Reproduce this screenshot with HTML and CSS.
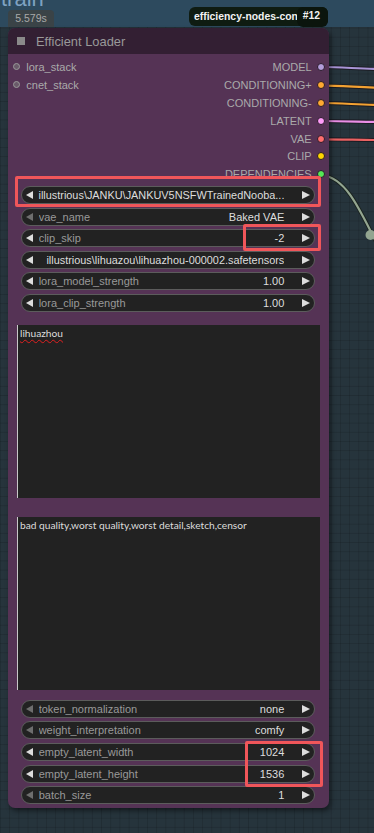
FILE: index.html
```html
<!DOCTYPE html>
<html>
<head>
<meta charset="utf-8">
<link rel="stylesheet" href="styles.css">
</head>
<body>
<div class="canvas">
  <div class="group-bar"><span class="group-title">train</span></div>

  <svg class="wires" width="374" height="833" viewBox="0 0 374 833">
    <g fill="none" stroke-linecap="round">
      <path d="M321 67 C 340 67, 355 68.5, 376 69" stroke="#1b1b22" stroke-width="4"/>
      <path d="M321 67 C 340 67, 355 68.5, 376 69" stroke="#a894d6" stroke-width="2.2"/>
      <path d="M321 85.7 C 340 85.7, 355 87, 376 87.6" stroke="#1b1b22" stroke-width="4"/>
      <path d="M321 85.7 C 340 85.7, 355 87, 376 87.6" stroke="#f3a232" stroke-width="2.2"/>
      <path d="M321 103 C 340 103, 355 104.5, 376 105" stroke="#1b1b22" stroke-width="4"/>
      <path d="M321 103 C 340 103, 355 104.5, 376 105" stroke="#f3a232" stroke-width="2.2"/>
      <path d="M321 121 C 340 121, 355 121.6, 376 122" stroke="#1b1b22" stroke-width="4"/>
      <path d="M321 121 C 340 121, 355 121.6, 376 122" stroke="#e98ee6" stroke-width="2.2"/>
      <path d="M321 139.3 C 340 139.3, 355 139.8, 376 140" stroke="#1b1b22" stroke-width="4"/>
      <path d="M321 139.3 C 340 139.3, 355 139.8, 376 140" stroke="#ea6262" stroke-width="2.2"/>
      <path d="M321 175 C 345 177, 358 205, 380 250" stroke="#1b2420" stroke-width="4"/>
      <path d="M321 175 C 345 177, 358 205, 380 250" stroke="#93a590" stroke-width="2.2"/>
    </g>
    <circle cx="370.5" cy="235" r="5" fill="#93a590"/>
  </svg>

  <div class="badge-time">5.579s</div>
  <div class="badge-src"><span class="src-name">efficiency-nodes-con</span><span class="src-id">#12</span></div>

  <div class="node">
    <div class="node-title"><span class="title-box"></span>Efficient Loader</div>
    <div class="node-body">
      <div class="slots">
        <div class="inputs">
          <div class="slot in"><span class="dot in-dot"></span>lora_stack</div>
          <div class="slot in"><span class="dot in-dot"></span>cnet_stack</div>
        </div>
        <div class="outputs">
          <div class="slot out">MODEL<span class="dot c-model"></span></div>
          <div class="slot out">CONDITIONING+<span class="dot c-cond"></span></div>
          <div class="slot out">CONDITIONING-<span class="dot c-cond"></span></div>
          <div class="slot out">LATENT<span class="dot c-latent"></span></div>
          <div class="slot out">VAE<span class="dot c-vae"></span></div>
          <div class="slot out">CLIP<span class="dot c-clip"></span></div>
          <div class="slot out">DEPENDENCIES<span class="dot c-dep"></span></div>
        </div>
      </div>

      <div class="widgets first">
        <div class="w"><span class="arr-l"></span><span class="val full">illustrious\JANKU\JANKUV5NSFWTrainedNooba...</span><span class="arr-r"></span></div>
        <div class="w"><span class="arr-l dim"></span><span class="lbl">vae_name</span><span class="val">Baked VAE</span><span class="arr-r"></span></div>
        <div class="w"><span class="arr-l"></span><span class="lbl">clip_skip</span><span class="val">-2</span><span class="arr-r"></span></div>
        <div class="w"><span class="arr-l"></span><span class="val full">illustrious\lihuazou\lihuazhou-000002.safetensors</span><span class="arr-r"></span></div>
        <div class="w"><span class="arr-l"></span><span class="lbl">lora_model_strength</span><span class="val">1.00</span><span class="arr-r"></span></div>
        <div class="w"><span class="arr-l"></span><span class="lbl">lora_clip_strength</span><span class="val">1.00</span><span class="arr-r"></span></div>
      </div>

      <div class="tb tb1"><span class="misspelled">lihuazhou</span></div>
      <div class="tb tb2">bad quality,worst quality,worst detail,sketch,censor</div>

      <div class="widgets second">
        <div class="w"><span class="arr-l dim"></span><span class="lbl">token_normalization</span><span class="val">none</span><span class="arr-r"></span></div>
        <div class="w"><span class="arr-l dim"></span><span class="lbl">weight_interpretation</span><span class="val">comfy</span><span class="arr-r"></span></div>
        <div class="w"><span class="arr-l"></span><span class="lbl">empty_latent_width</span><span class="val">1024</span><span class="arr-r"></span></div>
        <div class="w"><span class="arr-l"></span><span class="lbl">empty_latent_height</span><span class="val">1536</span><span class="arr-r"></span></div>
        <div class="w"><span class="arr-l dim"></span><span class="lbl">batch_size</span><span class="val">1</span><span class="arr-r"></span></div>
      </div>
    </div>
  </div>

  <div class="mark m1"></div>
  <div class="mark m2"></div>
  <div class="mark m3"></div>
</div>
</body>
</html>
```

FILE: styles.css
```css
* { box-sizing: border-box; }
html, body { margin: 0; padding: 0; }
body {
  width: 374px;
  height: 833px;
  overflow: hidden;
  background: #25323a;
  font-family: "Liberation Sans", Arial, sans-serif;
}
.canvas {
  position: relative;
  width: 374px;
  height: 833px;
  overflow: hidden;
  background-color: #26343c;
  background-image:
    linear-gradient(rgba(0, 0, 0, 0.13) 1px, transparent 1px),
    linear-gradient(90deg, rgba(0, 0, 0, 0.13) 1px, transparent 1px);
  background-size: 9.2px 9.2px;
}
.group-bar {
  height: 27px;
  background: #2d4a5e;
  overflow: hidden;
}
.group-title {
  display: block;
  font-size: 22px;
  line-height: 22px;
  margin-top: -12px;
  padding-left: 1px;
  color: #7fa2c2;
}
.wires {
  position: absolute;
  left: 0;
  top: 0;
  z-index: 0;
}
.badge-time {
  position: absolute;
  left: 7.7px;
  top: 10px;
  width: 46.6px;
  height: 16.7px;
  background: #3a4347;
  border-radius: 4px 4px 0 0;
  color: #a9a9a9;
  font-size: 10.5px;
  line-height: 16.7px;
  text-align: center;
  z-index: 2;
}
.badge-src {
  position: absolute;
  left: 188.7px;
  top: 7.3px;
  width: 139.6px;
  height: 18.7px;
  background: #0f1c12;
  border-radius: 6px;
  display: flex;
  align-items: center;
  color: #f2f2f2;
  font-size: 10.4px;
  font-weight: bold;
  z-index: 2;
}
.src-name {
  padding-left: 5.3px;
  width: 108px;
  overflow: hidden;
  white-space: nowrap;
}
.src-id {
  height: 19.6px;
  margin-top: 1px;
  line-height: 18.7px;
  padding: 0 8px 0 6px;
  background: #0b150d;
  border-radius: 6px;
}
.node {
  position: absolute;
  left: 8px;
  top: 28px;
  width: 321px;
  height: 780px;
  background: #553355;
  border-radius: 7px;
  box-shadow: 2px 3px 5px rgba(0, 0, 0, 0.45);
  display: flex;
  flex-direction: column;
  z-index: 1;
}
.node-title {
  height: 26px;
  flex: none;
  background: #331f33;
  border-radius: 7px 7px 0 0;
  display: flex;
  align-items: center;
  padding-left: 9.3px;
  color: #999;
  font-size: 12.9px;
}
.title-box {
  width: 8px;
  height: 8px;
  background: #8a8a8a;
  margin-right: 10.7px;
}
.node-body {
  padding-top: 4px;
  display: flex;
  flex-direction: column;
}
.slots {
  display: flex;
  justify-content: space-between;
}
.inputs, .outputs {
  display: flex;
  flex-direction: column;
}
.slot {
  height: 17.9px;
  display: flex;
  align-items: center;
  font-size: 11px;
  color: #aaa;
  white-space: nowrap;
}
.in {
  padding-left: 5.2px;
  gap: 6.1px;
}
.out {
  justify-content: flex-end;
  padding-right: 4.3px;
  gap: 5px;
}
.dot {
  display: inline-block;
  border-radius: 50%;
  flex: none;
}
.in-dot {
  width: 7px;
  height: 7px;
  background: #6a5a6a;
  border: 1.6px solid #9a9a9a;
}
.out .dot {
  width: 8px;
  height: 8px;
  border: 1px solid #2a1a2a;
}
.c-model { background: #b39ddb; }
.c-cond { background: #ffa931; }
.c-latent { background: #ff9cf9; }
.c-vae { background: #ff6e6e; }
.c-clip { background: #ffd500; }
.c-dep { background: #55e855; }

.widgets {
  display: flex;
  flex-direction: column;
  gap: 3.6px;
  margin: 0 14px 0 12.7px;
}
.widgets.first { margin-top: 2.7px; }
.widgets.second { margin-top: 10px; }
.w {
  height: 18px;
  border-radius: 9px;
  background: #222;
  border: 1px solid #5c5c5c;
  display: flex;
  align-items: center;
  font-size: 11px;
  white-space: nowrap;
}
.arr-l {
  flex: none;
  width: 0;
  height: 0;
  margin-left: 4.8px;
  border-top: 4.5px solid transparent;
  border-bottom: 4.5px solid transparent;
  border-right: 7.8px solid #ddd;
}
.arr-l.dim { border-right-color: #6e6e6e; }
.arr-r {
  flex: none;
  width: 0;
  height: 0;
  margin-right: 4px;
  border-top: 4.5px solid transparent;
  border-bottom: 4.5px solid transparent;
  border-left: 8.3px solid #ddd;
}
.lbl {
  flex: 1 1 auto;
  margin-left: 5.2px;
  color: #999;
  overflow: hidden;
}
.val {
  flex: none;
  margin-right: 17.7px;
  color: #ddd;
  text-align: right;
}
.val.full {
  flex: 1 1 auto;
  min-width: 0;
  margin-left: 5px;
  overflow: hidden;
  font-size: 10.9px;
}
.tb {
  flex: none;
  margin: 0 9px 0 9.3px;
  background: #222;
  border-left: 1px solid #c8c8c8;
  color: #dcdcdc;
  font-family: Lato, "Open Sans", sans-serif;
  font-size: 10.2px;
  line-height: 13px;
  padding: 2px 2px 2px 1.7px;
}
.tb1 { margin-top: 12.7px; height: 173.6px; }
.tb2 { margin-top: 18.4px; height: 173.3px; }
.misspelled {
  text-decoration: underline wavy #e02020;
  text-decoration-thickness: 1px;
  text-underline-offset: 2px;
}
.mark {
  position: absolute;
  border: 3px solid #f0565a;
  border-radius: 2px;
  z-index: 3;
}
.m1 { left: 15.3px; top: 176px; width: 305.7px; height: 30.7px; }
.m2 { left: 242.7px; top: 224px; width: 78.3px; height: 26.7px; }
.m3 { left: 245.3px; top: 740.7px; width: 78px; height: 46px; }
```
